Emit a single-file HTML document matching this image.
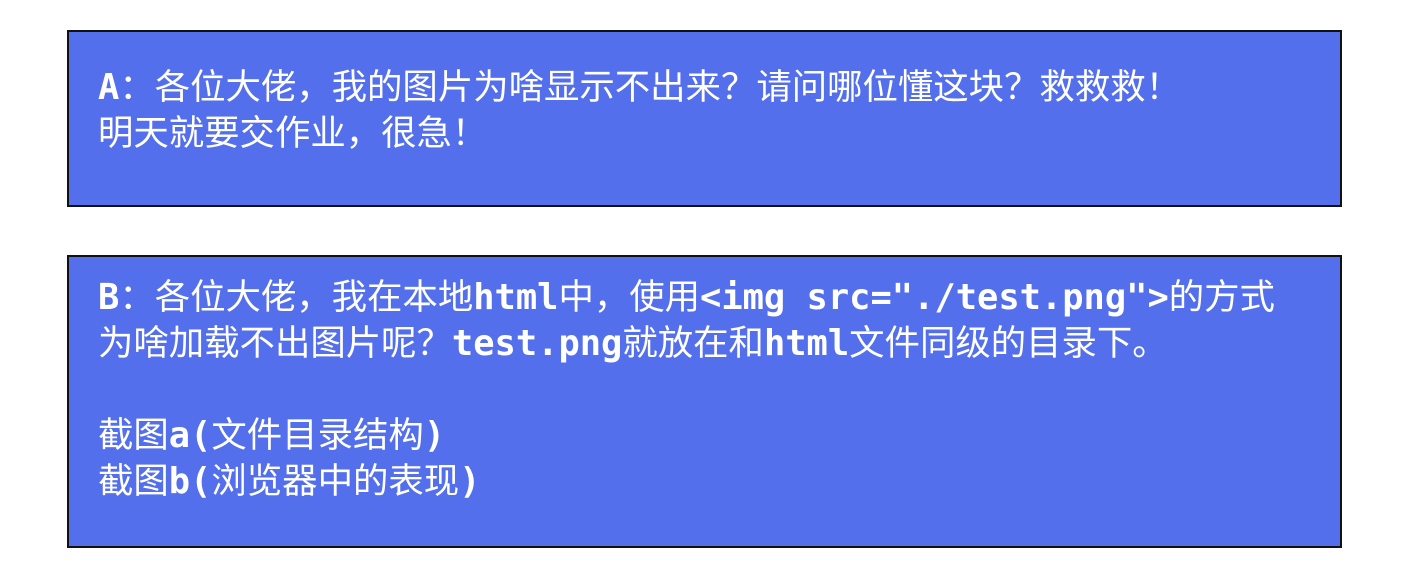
<!DOCTYPE html>
<html><head><meta charset="utf-8"><style>
html,body{margin:0;padding:0;background:#fff;width:1427px;height:571px;overflow:hidden}
.box{position:absolute;left:67px;width:1275px;background:#546fec;border:2px solid #111;box-sizing:border-box}
.t{position:absolute;left:98px;color:#fff;font-family:"DejaVu Sans Mono","Noto Sans CJK SC",monospace;font-size:35.4px;line-height:46px;white-space:pre}
.t b{font-weight:bold}
</style></head><body>
<div class="box" style="top:30px;height:177px"></div>
<div class="box" style="top:255px;height:293px"></div>
<div class="t" style="top:65px"><b>A</b>：各位大佬，我的图片为啥显示不出来？请问哪位懂这块？救救救！
明天就要交作业，很急！</div>
<div class="t" style="top:275px"><b>B</b>：各位大佬，我在本地<b>html</b>中，使用<b>&lt;img src="./test.png"&gt;</b>的方式
为啥加载不出图片呢？<b>test.png</b>就放在和<b>html</b>文件同级的目录下。

截图<b>a(</b>文件目录结构<b>)</b>
截图<b>b(</b>浏览器中的表现<b>)</b></div>
</body></html>
